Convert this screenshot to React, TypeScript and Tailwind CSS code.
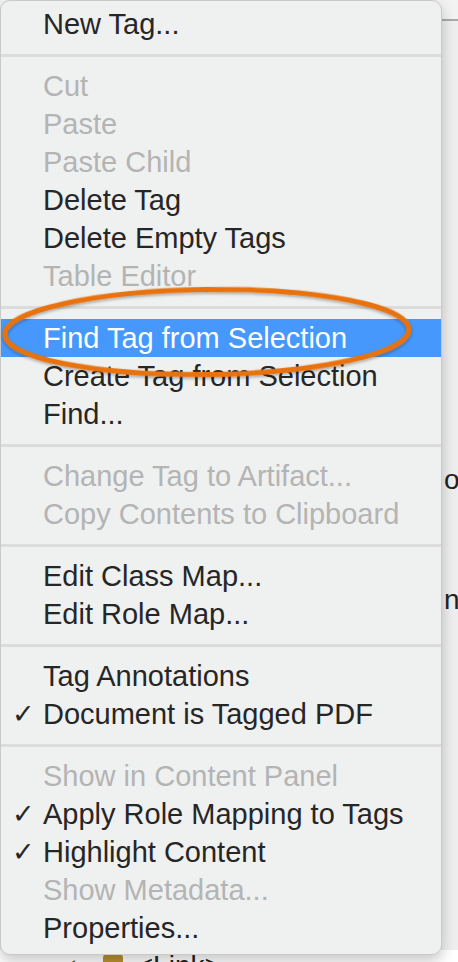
import React from "react";

type Item =
  | { kind: "sep" }
  | { kind: "item"; label: string; disabled?: boolean; checked?: boolean; active?: boolean };

const items: Item[] = [
  { kind: "item", label: "New Tag..." },
  { kind: "sep" },
  { kind: "item", label: "Cut", disabled: true },
  { kind: "item", label: "Paste", disabled: true },
  { kind: "item", label: "Paste Child", disabled: true },
  { kind: "item", label: "Delete Tag" },
  { kind: "item", label: "Delete Empty Tags" },
  { kind: "item", label: "Table Editor", disabled: true },
  { kind: "sep" },
  { kind: "item", label: "Find Tag from Selection", active: true },
  { kind: "item", label: "Create Tag from Selection" },
  { kind: "item", label: "Find..." },
  { kind: "sep" },
  { kind: "item", label: "Change Tag to Artifact...", disabled: true },
  { kind: "item", label: "Copy Contents to Clipboard", disabled: true },
  { kind: "sep" },
  { kind: "item", label: "Edit Class Map..." },
  { kind: "item", label: "Edit Role Map..." },
  { kind: "sep" },
  { kind: "item", label: "Tag Annotations" },
  { kind: "item", label: "Document is Tagged PDF", checked: true },
  { kind: "sep" },
  { kind: "item", label: "Show in Content Panel", disabled: true },
  { kind: "item", label: "Apply Role Mapping to Tags", checked: true },
  { kind: "item", label: "Highlight Content", checked: true },
  { kind: "item", label: "Show Metadata...", disabled: true },
  { kind: "item", label: "Properties..." },
];

function Background() {
  return (
    <div className="w-[458px] h-[962px] flex flex-col bg-[#eeeeee] text-[28px] leading-[32px] text-[#222]">
      <div className="h-[19px] shrink-0 bg-[#f2f2f2]" />
      <div className="h-[2px] shrink-0 bg-[#a9a9a9]" />
      <div className="flex-1 flex flex-col pl-[444px] pt-[443px] gap-[88px] whitespace-nowrap">
        <div>oli</div>
        <div>nA</div>
      </div>
      <div className="h-[12px] shrink-0 bg-white flex items-start pl-[62px] overflow-hidden">
        <span className="text-[20px] leading-[20px] text-[#555] font-['DejaVu_Sans',sans-serif] pt-[6px]">✓</span>
        <span className="w-[20px] h-[14px] mt-[4px] ml-[24px] rounded-sm bg-[#b8912f]" />
        <span className="leading-[32px] ml-[14px]">&lt;Link&gt;</span>
      </div>
    </div>
  );
}

export default function App() {
  return (
    <div className="relative w-[458px] h-[962px] overflow-hidden font-['Liberation_Sans',Arial,sans-serif]">
      <Background />

      {/* menu */}
      <div className="absolute left-0 top-0 w-[442px] h-[955px] rounded-[10px] bg-[#eff0f0] border border-[#c9c9c9] shadow-[0_6px_14px_rgba(0,0,0,0.22)] pt-[4px] pb-[7px] flex flex-col">
        {items.map((it, i) =>
          it.kind === "sep" ? (
            <div key={i} className="h-[24px] flex items-center">
              <div className="w-full h-[3px] bg-[#dcdcdc]" />
            </div>
          ) : (
            <div
              key={i}
              className={
                "h-[38px] flex items-center text-[29px] leading-[38px] whitespace-nowrap " +
                (it.active
                  ? "bg-[#4698fc] text-white"
                  : it.disabled
                  ? "text-[#b4b4b4]"
                  : "text-[#262626]")
              }
            >
              <span className="w-[42px] shrink-0 pl-[11px] text-[27px] leading-[40px] font-['DejaVu_Sans',sans-serif] text-[#262626]">
                {it.checked ? "✓" : ""}
              </span>
              <span>{it.label}</span>
            </div>
          )
        )}
      </div>

      {/* orange ellipse annotation */}
      <svg className="absolute left-0 top-0" width="458" height="962" viewBox="0 0 458 962">
        <defs>
          <filter id="sh" x="-10%" y="-30%" width="120%" height="160%">
            <feDropShadow dx="0" dy="1.5" stdDeviation="1.5" floodColor="#000" floodOpacity="0.35" />
          </filter>
        </defs>
        <ellipse
          cx="207"
          cy="332"
          rx="202"
          ry="42.5"
          fill="none"
          stroke="#e8720e"
          strokeWidth="5"
          transform="rotate(-0.7 207 332)"
          filter="url(#sh)"
        />
      </svg>
    </div>
  );
}
